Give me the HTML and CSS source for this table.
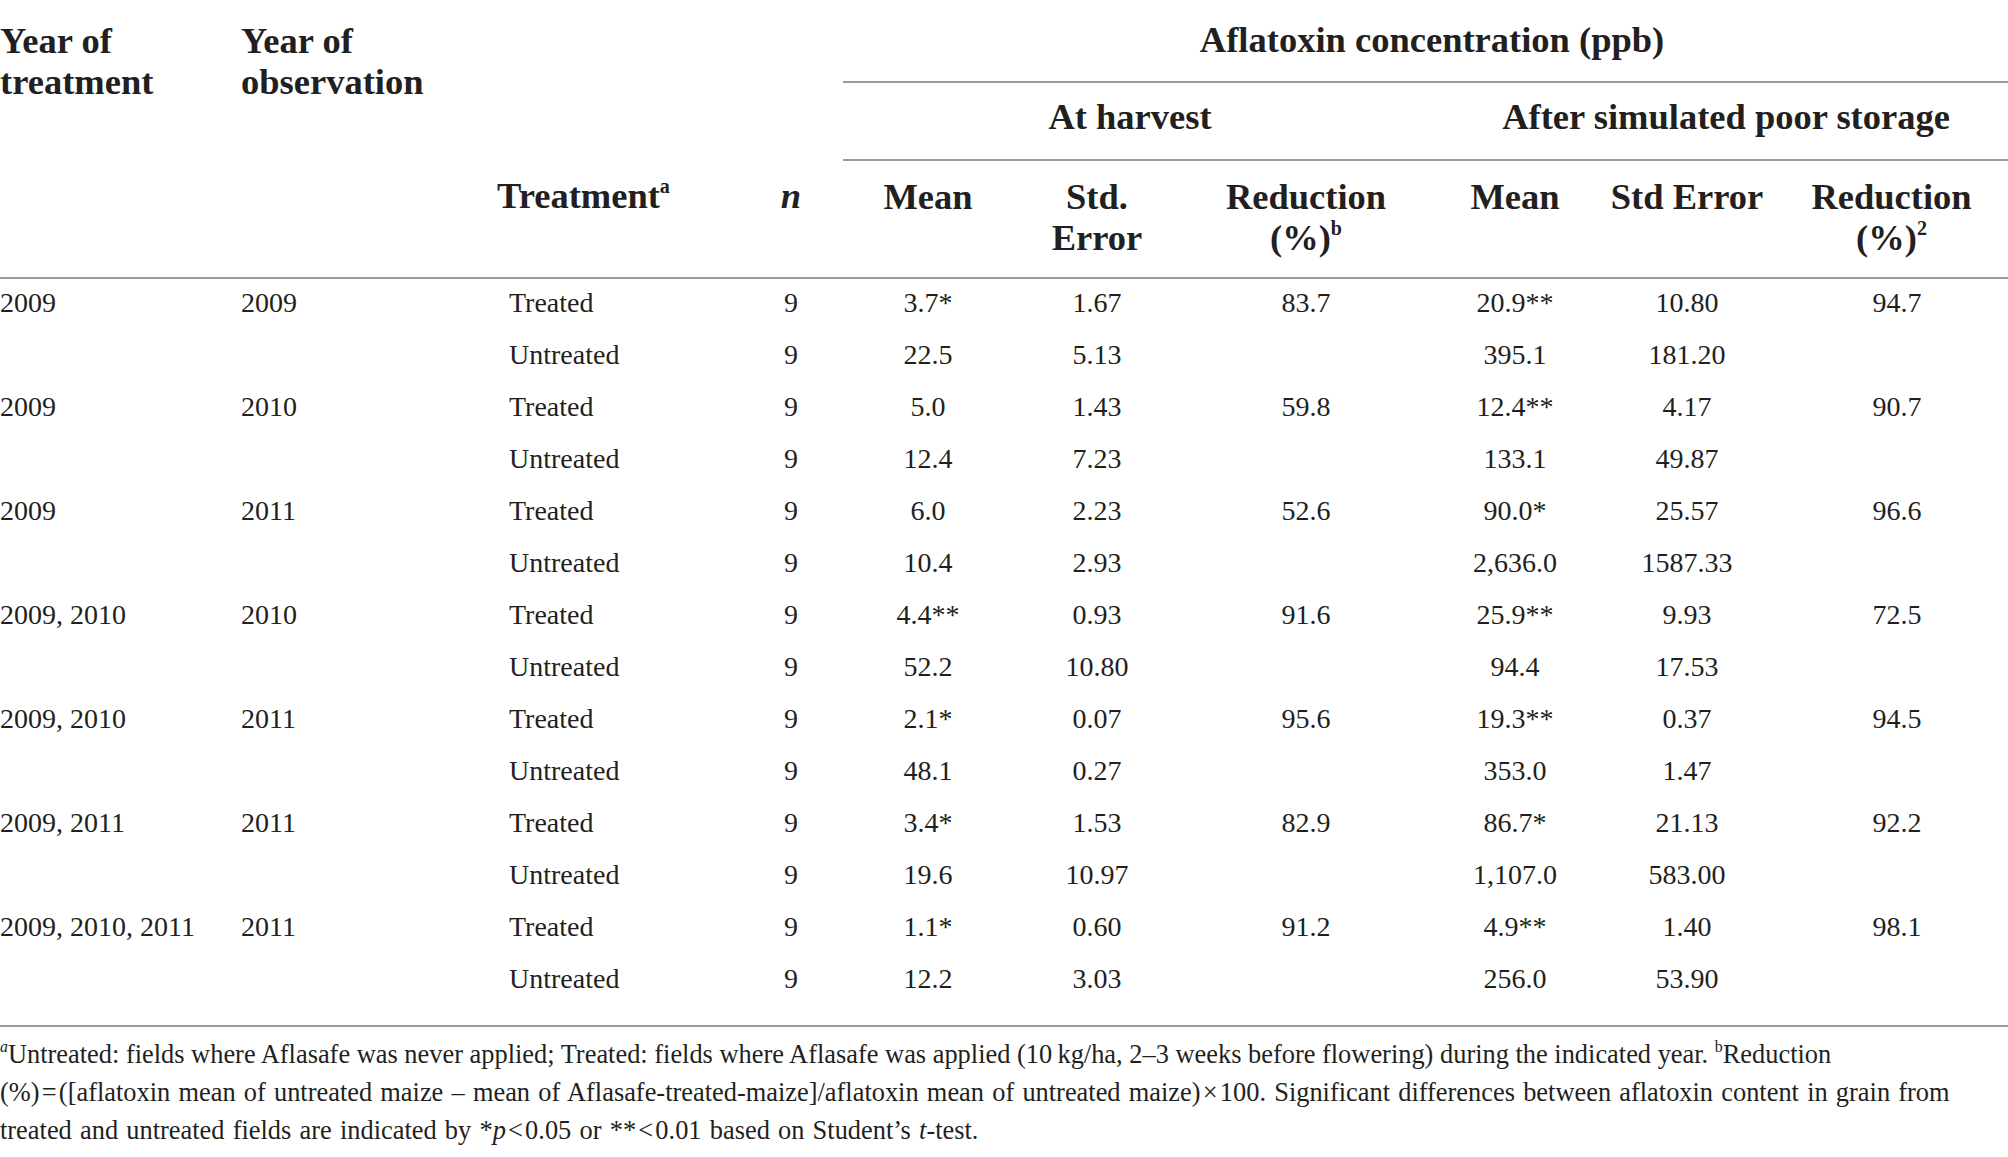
FILE: index.html
```html
<!DOCTYPE html>
<html>
<head>
<meta charset="utf-8">
<link rel="stylesheet" href="styles.css">
</head>
<body>
<table class="tbl">
  <colgroup>
    <col class="w-c1"><col class="w-c2"><col class="w-c3"><col class="w-n">
    <col class="w-mean"><col class="w-std"><col class="w-red">
    <col class="w-mean2"><col class="w-std2"><col class="w-red2">
  </colgroup>
  <thead>
    <tr class="h1">
      <th rowspan="3" class="hl">Year of<br>treatment</th>
      <th rowspan="3" class="hl">Year of<br>observation</th>
      <th colspan="2" rowspan="2"></th>
      <th colspan="6" class="grp grp-top">Aflatoxin concentration (ppb)</th>
    </tr>
    <tr class="h2">
      <th colspan="3" class="grp grp-harv">At harvest</th>
      <th colspan="3" class="grp grp-stor">After simulated poor storage</th>
    </tr>
    <tr class="h3">
      <th class="hleft">Treatment<sup>a</sup></th>
      <th class="hc"><i>n</i></th>
      <th class="hc">Mean</th>
      <th class="hc">Std.<br>Error</th>
      <th class="hc">Reduction<br>(%)<sup>b</sup></th>
      <th class="hc">Mean</th>
      <th class="hc">Std Error</th>
      <th class="hc">Reduction<br>(%)<sup>2</sup></th>
    </tr>
  </thead>
  <tbody>
    <tr><td>2009</td><td>2009</td><td class="tr">Treated</td><td class="c">9</td><td class="c">3.7*</td><td class="c">1.67</td><td class="c">83.7</td><td class="c">20.9**</td><td class="c">10.80</td><td class="c r2">94.7</td></tr>
    <tr><td></td><td></td><td class="tr">Untreated</td><td class="c">9</td><td class="c">22.5</td><td class="c">5.13</td><td class="c"></td><td class="c">395.1</td><td class="c">181.20</td><td class="c r2"></td></tr>
    <tr><td>2009</td><td>2010</td><td class="tr">Treated</td><td class="c">9</td><td class="c">5.0</td><td class="c">1.43</td><td class="c">59.8</td><td class="c">12.4**</td><td class="c">4.17</td><td class="c r2">90.7</td></tr>
    <tr><td></td><td></td><td class="tr">Untreated</td><td class="c">9</td><td class="c">12.4</td><td class="c">7.23</td><td class="c"></td><td class="c">133.1</td><td class="c">49.87</td><td class="c r2"></td></tr>
    <tr><td>2009</td><td>2011</td><td class="tr">Treated</td><td class="c">9</td><td class="c">6.0</td><td class="c">2.23</td><td class="c">52.6</td><td class="c">90.0*</td><td class="c">25.57</td><td class="c r2">96.6</td></tr>
    <tr><td></td><td></td><td class="tr">Untreated</td><td class="c">9</td><td class="c">10.4</td><td class="c">2.93</td><td class="c"></td><td class="c">2,636.0</td><td class="c">1587.33</td><td class="c r2"></td></tr>
    <tr><td>2009, 2010</td><td>2010</td><td class="tr">Treated</td><td class="c">9</td><td class="c">4.4**</td><td class="c">0.93</td><td class="c">91.6</td><td class="c">25.9**</td><td class="c">9.93</td><td class="c r2">72.5</td></tr>
    <tr><td></td><td></td><td class="tr">Untreated</td><td class="c">9</td><td class="c">52.2</td><td class="c">10.80</td><td class="c"></td><td class="c">94.4</td><td class="c">17.53</td><td class="c r2"></td></tr>
    <tr><td>2009, 2010</td><td>2011</td><td class="tr">Treated</td><td class="c">9</td><td class="c">2.1*</td><td class="c">0.07</td><td class="c">95.6</td><td class="c">19.3**</td><td class="c">0.37</td><td class="c r2">94.5</td></tr>
    <tr><td></td><td></td><td class="tr">Untreated</td><td class="c">9</td><td class="c">48.1</td><td class="c">0.27</td><td class="c"></td><td class="c">353.0</td><td class="c">1.47</td><td class="c r2"></td></tr>
    <tr><td>2009, 2011</td><td>2011</td><td class="tr">Treated</td><td class="c">9</td><td class="c">3.4*</td><td class="c">1.53</td><td class="c">82.9</td><td class="c">86.7*</td><td class="c">21.13</td><td class="c r2">92.2</td></tr>
    <tr><td></td><td></td><td class="tr">Untreated</td><td class="c">9</td><td class="c">19.6</td><td class="c">10.97</td><td class="c"></td><td class="c">1,107.0</td><td class="c">583.00</td><td class="c r2"></td></tr>
    <tr><td>2009, 2010, 2011</td><td>2011</td><td class="tr">Treated</td><td class="c">9</td><td class="c">1.1*</td><td class="c">0.60</td><td class="c">91.2</td><td class="c">4.9**</td><td class="c">1.40</td><td class="c r2">98.1</td></tr>
    <tr class="last"><td></td><td></td><td class="tr">Untreated</td><td class="c">9</td><td class="c">12.2</td><td class="c">3.03</td><td class="c"></td><td class="c">256.0</td><td class="c">53.90</td><td class="c r2"></td></tr>
  </tbody>
</table>
<p class="notes"><sup class="fn-a">a</sup>Untreated: fields where Aflasafe was never applied; Treated: fields where Aflasafe was applied (10&#8201;kg/ha, 2–3 weeks before flowering) during the indicated year. <sup>b</sup>Reduction<br><span class="wide">(%)&#8202;=&#8202;([aflatoxin mean of untreated maize – mean of Aflasafe-treated-maize]/aflatoxin mean of untreated maize)&#8202;×&#8202;100. Significant differences between aflatoxin content in grain from<br>treated and untreated fields are indicated by *<i>p</i>&#8202;&lt;&#8202;0.05 or **&#8202;&lt;&#8202;0.01 based on Student’s <i>t</i>-test.</span></p>
</body>
</html>
```

FILE: styles.css
```css
html, body {
  margin: 0;
  padding: 0;
  background: #ffffff;
}

body {
  font-family: "Liberation Serif", "Times New Roman", serif;
  color: #231f20;
  width: 2008px;
}

.tbl {
  width: 2008px;
  border-collapse: collapse;
  table-layout: fixed;
}

.w-c1 { width: 241px; }
.w-c2 { width: 256px; }
.w-c3 { width: 242px; }
.w-n { width: 104px; }
.w-mean { width: 170px; }
.w-std { width: 168px; }
.w-red { width: 250px; }
.w-mean2 { width: 168px; }
.w-std2 { width: 176px; }
.w-red2 { width: 233px; }

.tbl th {
  font-size: 36.5px;
  font-weight: bold;
  line-height: 41px;
  padding: 0;
}

.tbl thead {
  border-bottom: 2px solid #9a9a9a;
}

.tbl tbody {
  border-bottom: 2px solid #9a9a9a;
}

.h1 th { height: 79px; }
.h2 th { height: 66px; }
.h3 th { height: 101px; }

.hl {
  text-align: left;
  vertical-align: top;
  padding-top: 20px !important;
}

.grp {
  text-align: center;
  vertical-align: middle;
  border-bottom: 2px solid #9a9a9a;
}

.grp-top { padding-left: 13px !important; padding-bottom: 2px !important; }
.grp-harv { padding-right: 14px !important; padding-bottom: 10px !important; }
.grp-stor { padding-left: 13px !important; padding-bottom: 10px !important; }

.h3 th {
  vertical-align: top;
  padding-top: 15px;
}

.hleft { text-align: left; }
.hc { text-align: center; }

.tbl sup {
  font-size: 0.55em;
  line-height: 0;
  vertical-align: 0.75em;
  font-weight: normal;
}

.tbl th sup {
  font-weight: bold;
}

.tbl td {
  font-size: 28px;
  height: 48px;
  line-height: 30px;
  padding: 0 0 4px 0;
  vertical-align: middle;
  text-align: left;
  white-space: nowrap;
}

.tbl td.tr { padding-left: 12px; }
.tbl td.c { text-align: center; }
.tbl td.r2 { padding-left: 11px; }

.tbl tr.last td {
  height: 48px;
  padding-bottom: 22px;
}

.notes {
  margin: 8px 0 0 0;
  font-size: 26.4px;
  line-height: 38px;
  white-space: nowrap;
}

.notes .wide {
  word-spacing: 1.6px;
}

.notes sup {
  font-size: 0.6em;
  line-height: 0;
  vertical-align: 0.7em;
}

.notes .fn-a {
  font-style: italic;
}
```
